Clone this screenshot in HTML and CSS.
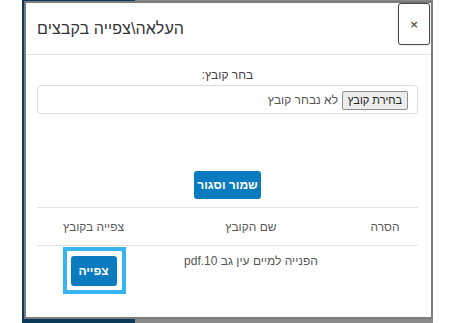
FILE: index.html
```html
<!DOCTYPE html>
<html lang="he">
<head>
<meta charset="utf-8">
<link rel="stylesheet" href="styles.css">
</head>
<body>
<div class="stage">
  <div class="modal">
    <div class="modal-header">
      <h4 class="modal-title">העלאה\צפייה בקבצים</h4>
      <button class="close" type="button">×</button>
    </div>
    <div class="modal-body" dir="rtl">
      <div class="file-label">בחר קובץ:</div>
      <div class="file-input">
        <span class="file-btn">בחירת קובץ</span>
        <span class="file-none">לא נבחר קובץ</span>
      </div>
      <div class="actions">
        <button class="btn-primary save" type="button">שמור וסגור</button>
      </div>
      <table class="files">
        <thead>
          <tr>
            <th class="c-remove">הסרה</th>
            <th class="c-name">שם הקובץ</th>
            <th class="c-view">צפייה בקובץ</th>
          </tr>
        </thead>
        <tbody>
          <tr>
            <td></td>
            <td class="fname">הפנייה למיים עין גב 10.pdf</td>
            <td><span class="focus-ring"><button class="btn-primary view" type="button">צפייה</button></span></td>
          </tr>
        </tbody>
      </table>
    </div>
  </div>
</div>
</body>
</html>
```

FILE: styles.css
```css
html, body {
  margin: 0;
  padding: 0;
  background: #ffffff;
}
body {
  font-family: "Liberation Sans", "DejaVu Sans", sans-serif;
  color: #555;
}
.stage {
  margin-left: 22px;
  width: 411px;
  height: 323px;
  box-sizing: border-box;
  padding: 1px 0 0 2px;
  background-color: #8a8a8a;
  background-image:
    linear-gradient(#0b3a58, #0b3a58),
    linear-gradient(#0b3a58, #0b3a58),
    linear-gradient(#0b3a58, #0b3a58);
  background-repeat: no-repeat;
  background-size: 2px 100%, 113px 4px, 113px 1px;
  background-position: 0 0, 0 100%, 0 0;
}
.modal {
  width: 409px;
  height: 318px;
  box-sizing: border-box;
  border: 2px solid #7c7c7c;
  background: #fff;
  display: flex;
  flex-direction: column;
}
.modal-header {
  display: flex;
  justify-content: space-between;
  align-items: flex-start;
  height: 51px;
  border-bottom: 1px solid #e5e5e5;
  padding: 0 1px 0 11px;
}
.modal-title {
  margin: 0;
  align-self: center;
  font-size: 16px;
  font-weight: normal;
  color: #333;
  line-height: 20px;
  letter-spacing: 0.1px;
}
.close {
  width: 32px;
  height: 42px;
  margin-top: 0;
  padding: 0;
  border: 1px solid #4a4a4a;
  border-radius: 3px;
  background: #fff;
  box-shadow: 0 0 2px rgba(0,0,0,0.25);
  color: #555;
  font-family: "DejaVu Sans", sans-serif;
  font-size: 11px;
  font-weight: bold;
  line-height: 1;
}
.modal-body {
  padding: 12px 13px 0 11px;
  font-size: 12px;
}
.file-label {
  text-align: center;
  line-height: 17px;
  color: #444;
}
.file-input {
  margin-top: 1px;
  height: 29px;
  box-sizing: border-box;
  border: 1px solid #ddd;
  border-radius: 4px;
  display: flex;
  align-items: center;
  gap: 4px;
  padding: 1px 9px 0 0;
}
.file-btn {
  width: 66px;
  height: 19px;
  box-sizing: border-box;
  border: 1px solid #8f8f8f;
  border-radius: 2px;
  background: #ececec;
  color: #222;
  font-size: 11px;
  display: flex;
  align-items: center;
  justify-content: center;
}
.file-none {
  color: #555;
}
.actions {
  display: flex;
  justify-content: center;
  margin-top: 57px;
  padding-bottom: 8px;
  border-bottom: 1px solid #e3e3e3;
}
.btn-primary {
  border: none;
  border-radius: 3px;
  background: #0b7bbf;
  color: #fff;
  font-family: "Liberation Sans", "DejaVu Sans", sans-serif;
  font-size: 12px;
  font-weight: bold;
  padding: 0;
}
.save {
  width: 67px;
  height: 28px;
}
.files {
  width: 100%;
  border-collapse: collapse;
  table-layout: fixed;
}
.files th {
  font-weight: normal;
  color: #5a5a5a;
  height: 37px;
  padding: 0;
  border-bottom: 1px solid #e3e3e3;
  text-align: center;
}
.c-remove { width: 66px; }
.c-name { width: 202px; }
.c-view { width: 113px; }
.files td {
  padding: 1px 0 0;
  text-align: center;
  vertical-align: top;
  line-height: 15px;
}
.files td.fname {
  padding-top: 8px;
}
.focus-ring {
  display: inline-block;
  margin-left: 1px;
  border: 4px solid #38b4f0;
  padding: 5px 5px 4px 4px;
  line-height: 0;
}
.view {
  width: 46px;
  height: 30px;
  line-height: normal;
}
```
